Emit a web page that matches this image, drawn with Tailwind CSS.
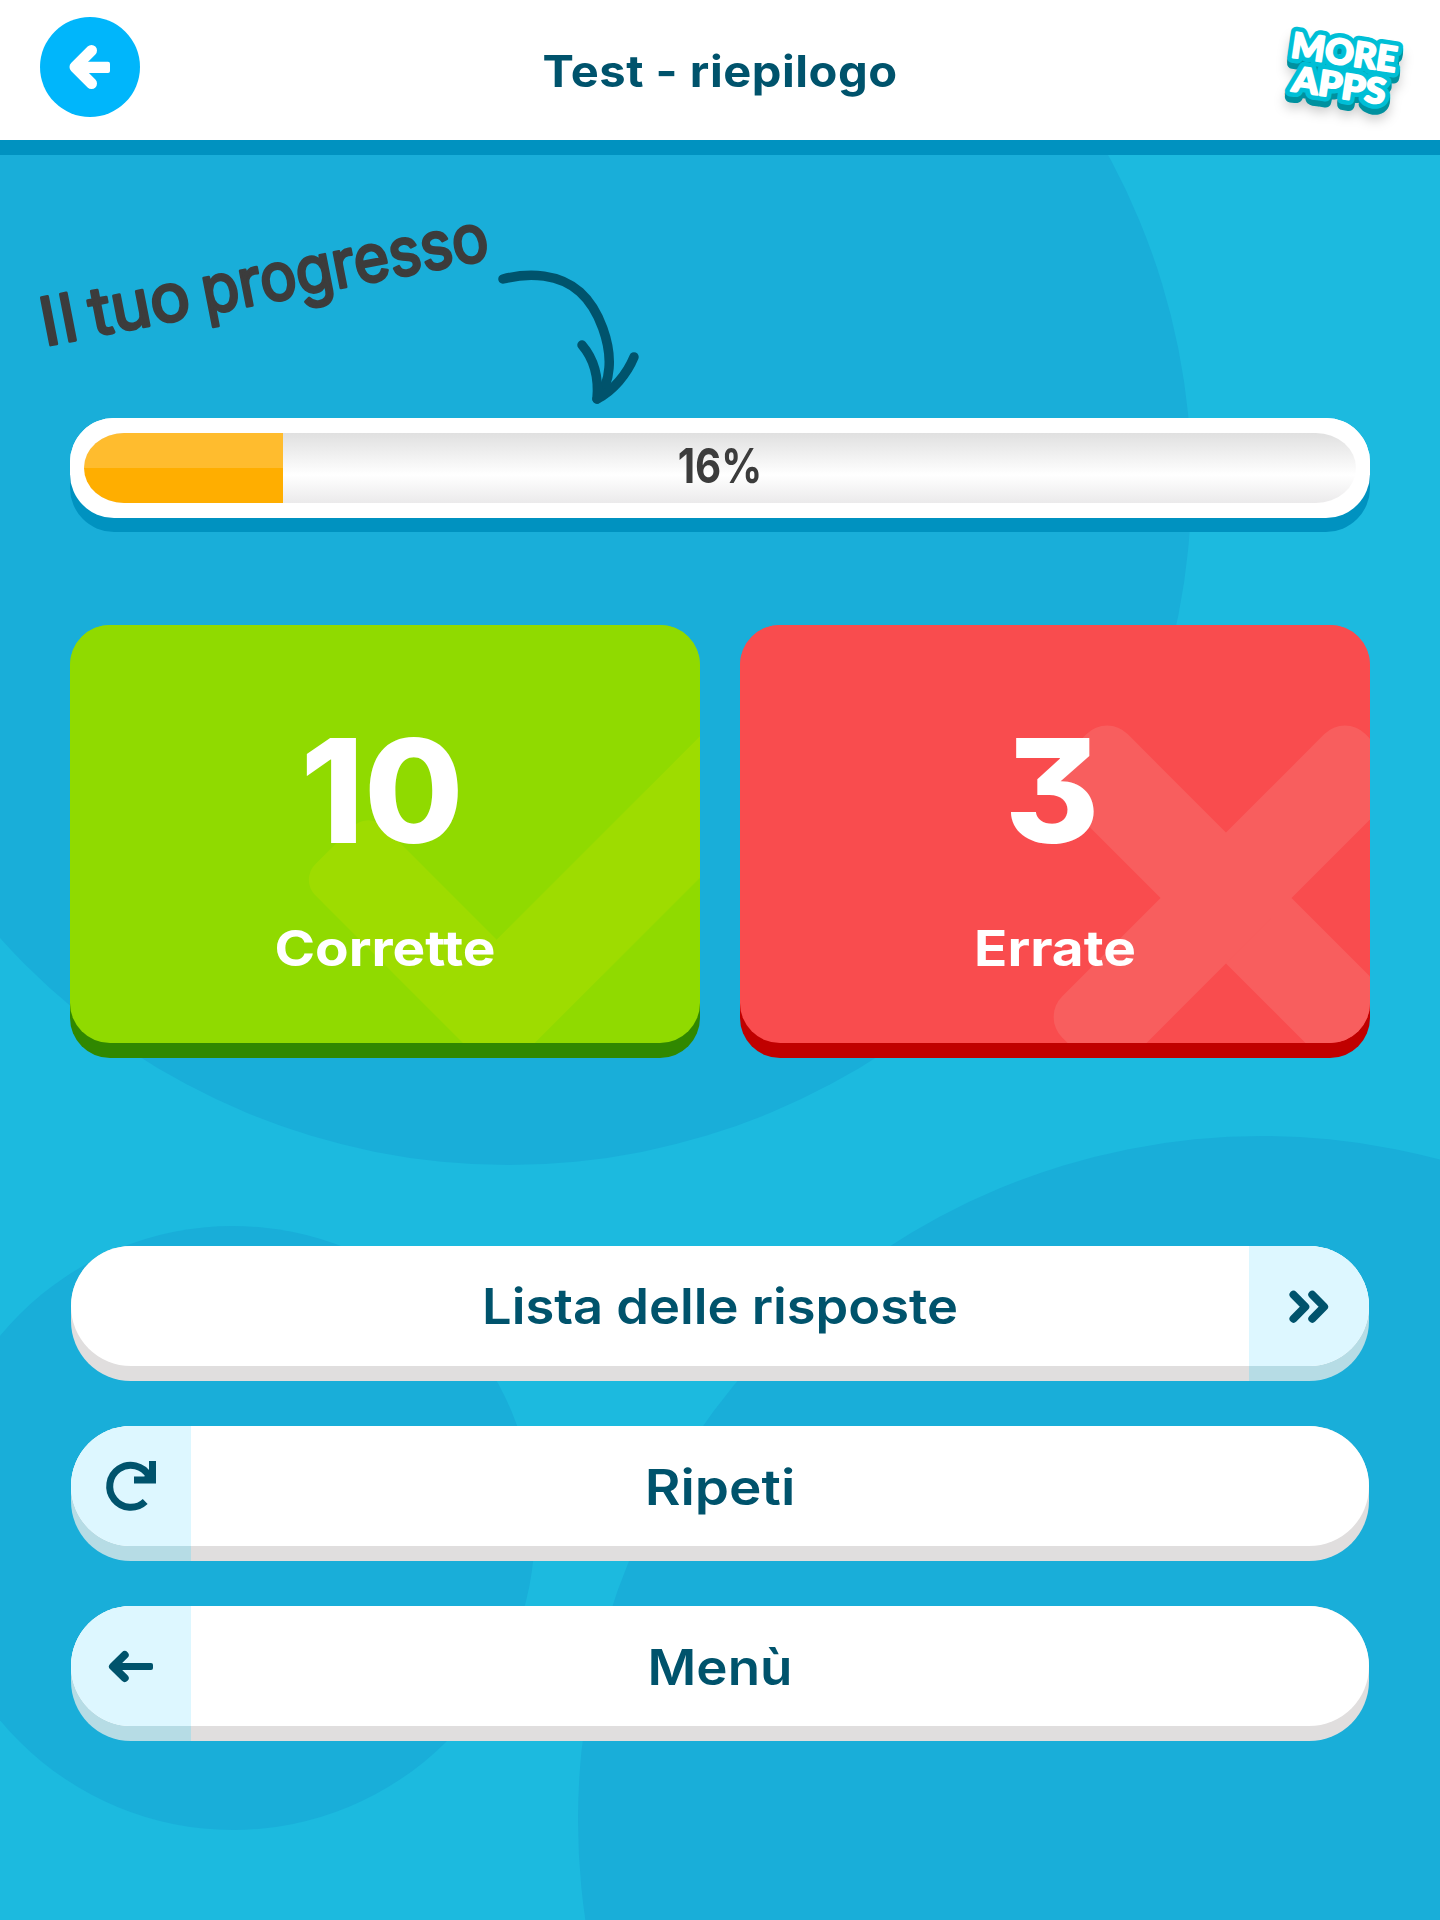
<!DOCTYPE html>
<html lang="it">
<head>
    <meta charset="UTF-8">
    <meta name="viewport" content="width=device-width, initial-scale=1.0">
    <title>Test - riepilogo</title>
    <script src="https://cdn.jsdelivr.net/npm/@tailwindcss/browser@4"></script>
</head>
<body class="bg-[#1cbadf] font-['Inter',sans-serif]">
<div class="relative w-[1440px] h-[1920px] overflow-hidden">

    <!-- Background circles -->
    <svg class="absolute inset-0" width="1440" height="1920" fill="#19aed9">
        <circle cx="508.500" cy="482" r="683"/>
        <circle cx="233" cy="1528" r="302"/>
        <circle cx="1262" cy="1820" r="684"/>
    </svg>

    <div class="relative">
        <!-- Header -->
        <header class="h-[155px] bg-white border-b-[15px] border-[#0092c0] flex items-start justify-between pl-10">
            <button class="mt-[17px] size-[100px]">
                <svg width="100" height="100" viewBox="0 0 100 100">
                    <circle cx="50" cy="50" r="50" fill="#00b6fb"/>
                    <path d="M51.500 33.500 35 50l16.500 16.500" fill="none" stroke="#fff" stroke-width="11" stroke-linecap="round" stroke-linejoin="round"/>
                    <rect x="36" y="44.700" width="34" height="11.300" rx="2" fill="#fff"/>
                </svg>
            </button>
            <h1 class="mt-[41px] ml-[60px] text-[44px] leading-[60px] font-bold text-[#00536c] tracking-[0.5px] scale-x-[1.07]">Test - riepilogo</h1>
            <svg width="200" height="140" viewBox="0 0 200 140" class="font-['Lato',sans-serif] font-black text-[35px]">
                <defs>
                    <g id="more-apps">
                        <text transform="translate(50 57) rotate(8.300)" textLength="106" lengthAdjust="spacingAndGlyphs">MORE</text>
                        <text transform="translate(51 91) rotate(8.300)" textLength="94" lengthAdjust="spacingAndGlyphs">APPS</text>
                    </g>
                </defs>
                <g stroke-width="11" stroke-linejoin="round">
                    <use href="#more-apps" y="6" fill="#00919f" stroke="#00919f" class="drop-shadow-[0_5px_6px_rgb(0_0_0/0.2)]"/>
                    <use href="#more-apps" y="3" fill="#00919f" stroke="#00919f"/>
                    <use href="#more-apps" fill="#00bfd6" stroke="#00bfd6"/>
                </g>
                <use href="#more-apps" fill="#fff" stroke="#fff" stroke-width="2" stroke-linejoin="round"/>
            </svg>
        </header>

        <main class="px-[70px]">
            <!-- Progress caption and arrow -->
            <svg class="-ml-[70px]" width="700" height="263" viewBox="0 155 700 263">
                <g class="text-[66px] font-normal" fill="#3c3c3c" stroke="#3c3c3c" stroke-width="3" stroke-linejoin="round" transform="translate(45 346) rotate(-11.100)">
                    <text textLength="36" lengthAdjust="spacing">Il</text>
                    <text x="50" textLength="101" lengthAdjust="spacingAndGlyphs">tuo</text>
                    <text x="164" textLength="291" lengthAdjust="spacingAndGlyphs">progresso</text>
                </g>
                <g fill="none" stroke="#00536c" stroke-width="9.500" stroke-linecap="round" stroke-linejoin="round">
                    <path d="M503 279C530 272 560 274 580 292C600 310 611 345 609 368C608 382 603 392 597 399"/>
                    <path d="M582 345C594 359 599 377 597 399C613 391 627 374 634 357"/>
                </g>
            </svg>

            <!-- Progress bar -->
            <div class="h-[114px] rounded-[44px] bg-[linear-gradient(#fff_50%,#0092c0_50%)]">
                <div class="h-[100px] rounded-[44px] bg-white px-[14px] pt-[15px]">
                    <div class="relative h-[70px] rounded-[40px/35px] overflow-hidden bg-[linear-gradient(#e0e0e0,#fff_60%,#ebeaeb)]">
                        <div class="h-full bg-[linear-gradient(#ffbc2e_50%,#ffae00_50%)]" style="width: 199px"></div>
                        <span class="absolute inset-0 text-center text-[48px] leading-[66px] font-bold text-[#3c3c3c] scale-x-[0.84]">16%</span>
                    </div>
                </div>
            </div>

            <!-- Results -->
            <div class="mt-[93px] grid grid-cols-2 gap-10 text-white text-center">
                <section class="h-[433px] rounded-[40px] bg-[linear-gradient(#90da00_50%,#308800_50%)]">
                    <div class="relative h-[418px] rounded-[40px] overflow-hidden bg-[#90da00]">
                        <svg class="absolute inset-0" width="630" height="418" fill="#9edc00">
                            <rect y="-48.500" width="281" height="97" rx="22" transform="translate(264 220.500) rotate(45)"/>
                            <rect y="-50" width="440" height="100" transform="translate(394 418) rotate(-45)"/>
                        </svg>
                        <p class="relative pt-[86px] pr-[6px] text-[144px] leading-[160px] font-extrabold">10</p>
                        <p class="relative mt-[48px] text-[49px] leading-[60px] font-bold scale-x-[1.12]">Corrette</p>
                    </div>
                </section>
                <section class="h-[433px] rounded-[40px] bg-[linear-gradient(#f94c4e_50%,#c00000_50%)]">
                    <div class="relative h-[418px] rounded-[40px] overflow-hidden bg-[#f94c4e]">
                        <svg class="absolute inset-0" width="630" height="418" fill="#f85e5e">
                            <g transform="translate(486 273)">
                                <rect x="-214.500" y="-46.300" width="429" height="92.600" rx="29" transform="rotate(45)"/>
                                <rect x="-214.500" y="-46.300" width="429" height="92.600" rx="29" transform="rotate(-45)"/>
                            </g>
                        </svg>
                        <p class="relative pt-[86px] pr-[6px] text-[144px] leading-[160px] font-extrabold [font-feature-settings:'cv09']">3</p>
                        <p class="relative mt-[48px] text-[49px] leading-[60px] font-bold scale-x-[1.12]">Errate</p>
                    </div>
                </section>
            </div>

            <!-- Actions -->
            <nav class="mt-[188px] mx-px flex flex-col gap-[45px] text-[49px] font-semibold text-[#00536c] text-center">
                <a class="h-[135px] rounded-[60px] bg-[linear-gradient(to_left,#b6dce5_120px,#e0dede_120px)]">
                    <div class="flex items-center h-[120px] rounded-[60px] overflow-hidden bg-white">
                        <span class="flex-1 ml-[120px] pt-[2px] scale-x-[1.07]">Lista delle risposte</span>
                        <svg width="120" height="120" viewBox="0 0 120 120" class="bg-[#ddf7ff]" fill="none" stroke="#00536c" stroke-width="8" stroke-linecap="round" stroke-linejoin="round">
                            <path d="m44.500 48.700 11.800 12-11.800 12"/>
                            <path d="m63.300 48.700 11.800 12-11.800 12"/>
                        </svg>
                    </div>
                </a>
                <a class="h-[135px] rounded-[60px] bg-[linear-gradient(to_right,#b6dce5_120px,#e0dede_120px)]">
                    <div class="flex items-center h-[120px] rounded-[60px] overflow-hidden bg-white">
                        <svg width="120" height="120" viewBox="0 0 120 120" class="bg-[#ddf7ff]" fill="none" stroke="#00536c" stroke-width="7">
                            <path d="M74.200 75.500A21 21 0 1 1 78 50"/>
                            <path d="M81.500 35v19H63"/>
                            <path d="M73 51l6-6v6z" fill="#00536c" stroke="none"/>
                        </svg>
                        <span class="flex-1 mr-[120px] pt-[3px] scale-x-[1.12]">Ripeti</span>
                    </div>
                </a>
                <a class="h-[135px] rounded-[60px] bg-[linear-gradient(to_right,#b6dce5_120px,#e0dede_120px)]">
                    <div class="flex items-center h-[120px] rounded-[60px] overflow-hidden bg-white">
                        <svg width="120" height="120" viewBox="0 0 120 120" class="bg-[#ddf7ff]">
                            <path d="M53.700 49 42 60.500l11.700 11.500" fill="none" stroke="#00536c" stroke-width="8" stroke-linecap="round" stroke-linejoin="round"/>
                            <rect x="40" y="57" width="42" height="7" rx="2" fill="#00536c"/>
                        </svg>
                        <span class="flex-1 mr-[120px] pt-[3px] scale-x-[1.08]">Menù</span>
                    </div>
                </a>
            </nav>
        </main>
    </div>
</div>
</body>
</html>
